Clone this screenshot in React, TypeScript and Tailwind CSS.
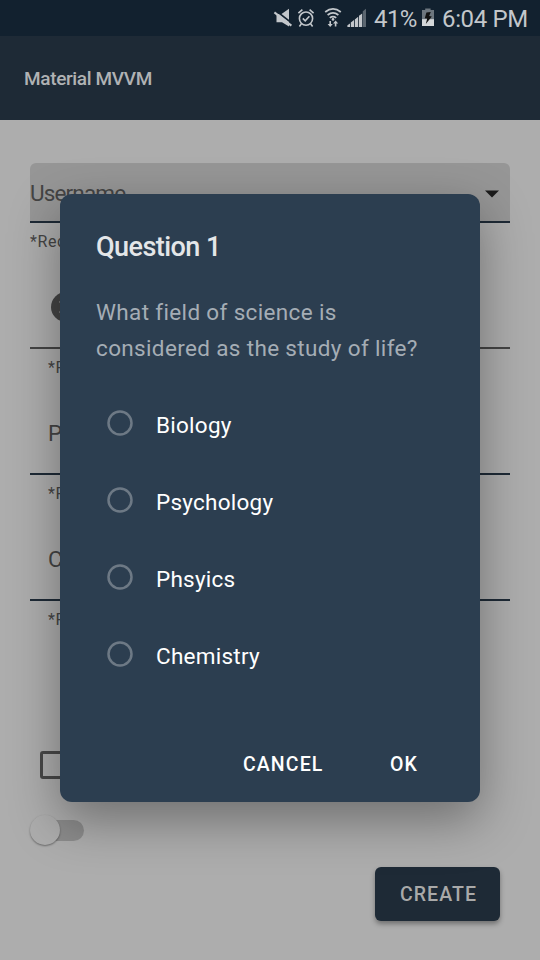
import React from "react";

const options = ["Biology", "Psychology", "Phsyics", "Chemistry"];

function StatusBar() {
  return (
    <div className="flex h-9 w-full bg-[#12212f] text-[#c3c7cb]">
      <svg width="368" height="36" viewBox="0 0 368 36" className="shrink-0" fill="none">
        <path d="M276.500 14h5l7.500-5.200V26.500l-7-4.300h-5.500z" fill="#c3c7cb" />
        <path d="M275.500 10.400 292.500 23.600" stroke="#12212f" strokeWidth="1.800" />
        <path d="M274.400 12.400 291.400 25.600" stroke="#c3c7cb" strokeWidth="2" />
        <g stroke="#c3c7cb" strokeWidth="1.6">
          <circle cx="306" cy="18.6" r="6.6" />
          <path d="m302.8 18.4 2.4 2.4 4.2-4.6" />
          <path d="m298.4 13.2 4-3.6M313.6 13.2l-4-3.6M301.4 23.8l-2 2.6M310.6 23.8l2 2.6" />
        </g>
        <g stroke="#c3c7cb" strokeWidth="1.800">
          <path d="M325.2 12q7.8-6.200 15.600 0M327.600 15q5.400-4.200 10.800 0M329.800 17.900q3.200-2.400 6.400 0" />
        </g>
        <circle cx="333" cy="19.4" r="1.3" fill="#c3c7cb" />
        <path d="M329.4 21h1.6v3h1.8l-2.6 3-2.6-3h1.8zM334.8 26.6v-3H333l2.6-3 2.6 3h-1.8v3z" fill="#c3c7cb" />
        <path d="M347.4 27v-1.800l2.600-1.600V27zM350.800 27v-4.600l3.200-2.400v7zM354.800 27v-7.600l3.400-2.600V27zM359 27V15.800l3.200-2.400V27z" fill="#c3c7cb" />
        <path d="M362.8 27V11.200l3.200-2.400V27z" fill="#5b6670" />
      </svg>
      <span className="ml-[6px] w-[43px] whitespace-nowrap text-[24px] leading-[39px] tracking-[-0.600px]">41%</span>
      <svg width="13" height="36" viewBox="0 0 13 36" className="ml-[5px] shrink-0">
        <path d="M0 10h3.200V8.400h5.400V10h3.400v10H0z" fill="#6d767e" />
        <path d="M0 19.200h12V26H0z" fill="#d5d8da" />
        <path d="m4.400 12.400 4.400-.4-1.600 4 2.600.6-6 7.400 1.400-5.400-2.400-.4z" fill="#111" />
      </svg>
      <span className="ml-[7px] whitespace-nowrap text-[24px] leading-[39px] tracking-[-0.350px]">6:04 PM</span>
    </div>
  );
}

function Helper({ indent }: { indent?: boolean }) {
  return (
    <div className={`h-[66px] pt-[9px] text-[16px] leading-[20px] tracking-[0.6px] text-[#444] ${indent ? "pl-[18px]" : ""}`}>
      *Required
    </div>
  );
}

function Form() {
  return (
    <div className="h-[840px] px-[30px] pt-[43px] text-[#444]">
      <div className="flex h-[60px] items-center justify-between rounded-t-[6px] border-b-2 border-[#1e2a36] bg-[#969696] pr-[11px]">
        <span className="mt-px text-[22.500px] leading-[28px] tracking-[-0.850px]">Username</span>
        <svg width="14" height="8" viewBox="0 0 14 8" className="mt-[3px]">
          <path d="M0 .500h14L7 7.500z" fill="#1b1b1b" />
        </svg>
      </div>
      <Helper />
      <div className="flex h-[60px] border-b-2 border-[#444] pl-[21px] pt-[3px]">
        <svg width="30" height="30" viewBox="0 0 30 30">
          <circle cx="15" cy="15" r="15" fill="#444" />
          <path d="m9 9 12 12M21 9 9 21" stroke="#a4a4a4" strokeWidth="2.600" />
        </svg>
      </div>
      <Helper indent />
      <div className="flex h-[60px] border-b-2 border-[#1e2a36] pl-[18px] pt-[3px] text-[22.500px] leading-[30px]">Password</div>
      <Helper indent />
      <div className="flex h-[60px] border-b-2 border-[#1e2a36] pl-[18px] pt-[3px] text-[22.500px] leading-[30px]">Confirm</div>
      <Helper indent />
      <div className="ml-[10px] mt-[84px] h-[28px] w-[28px] rounded-[3px] border-[3px] border-[#484848]" />
      <div className="mt-[36px] flex h-[30px] w-[54px] items-center">
        <div className="z-0 h-[30px] w-[30px] shrink-0 rounded-full bg-[#adadad] shadow-[0_1px_2px_rgba(0,0,0,0.4)]" />
        <div className="-ml-[20px] -z-10 h-[21px] w-[44px] rounded-full bg-[#8c8c8c]" />
      </div>
      <div className="mr-[10px] mt-[22px] flex justify-end">
        <button className="h-[54px] w-[125px] rounded-[6px] bg-[#1e2a36] pl-[2px] pt-[2px] text-[19.500px] font-medium tracking-[1.050px] text-[#a9a9a9] shadow-[0_3px_5px_rgba(0,0,0,0.35)]">
          CREATE
        </button>
      </div>
    </div>
  );
}

function Dialog() {
  return (
    <div className="absolute left-[60px] top-[194px] flex h-[608px] w-[420px] flex-col rounded-[12px] bg-[#2c3e50] px-9 shadow-[0_18px_50px_rgba(0,0,0,0.36)]">
      <h2 className="mt-[36px] text-[27px] font-medium leading-[34px] tracking-[-0.550px] text-[#e4e6e8]">Question 1</h2>
      <p className="mt-[30px] whitespace-nowrap text-[22.500px] leading-[36px] tracking-[0.350px] text-[#a5adb5]">
        What field of science is
        <br />
        considered as the study of life?
      </p>
      <div className="mt-[21px] flex flex-col">
        {options.map((label) => (
          <label key={label} className="flex h-[77px] items-center text-[22.500px] tracking-[0.250px] text-white">
            <svg width="26" height="26" viewBox="0 0 26 26" className="mb-[5px] ml-[11px] mr-[23px]">
              <circle cx="13" cy="13" r="11.500" fill="none" stroke="#6d7985" strokeWidth="2.500" />
            </svg>
            {label}
          </label>
        ))}
      </div>
      <div className="mt-[58px] flex text-[19.500px] font-medium leading-[23px] tracking-[1.100px] text-white">
        <button className="ml-[147px] w-[147px] text-left">CANCEL</button>
        <button>OK</button>
      </div>
    </div>
  );
}

export default function App() {
  return (
    <div className="relative isolate h-[960px] w-[540px] overflow-hidden bg-[#adadad] font-['Roboto','Liberation_Sans',sans-serif]">
      <StatusBar />
      <header className="flex h-[84px] items-center bg-[#1e2a36] pl-6 pt-[2px] text-[19px] font-medium tracking-[-0.350px] text-[#b0b2b4]">Material MVVM</header>
      <Form />
      <Dialog />
    </div>
  );
}
